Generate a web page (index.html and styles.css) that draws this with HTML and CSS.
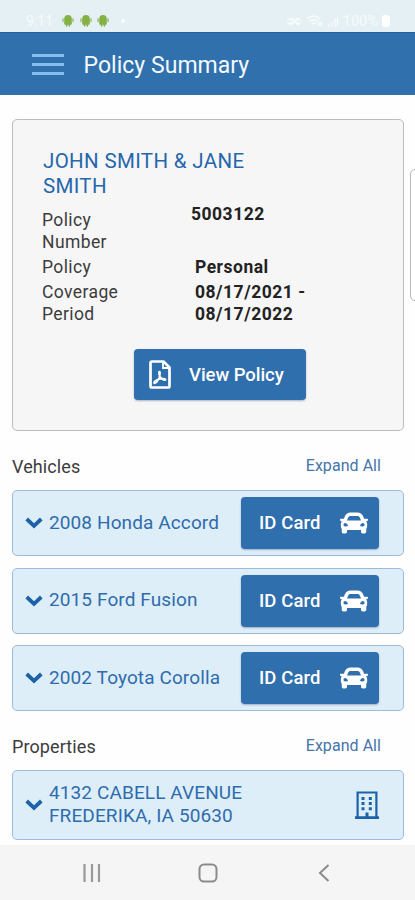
FILE: index.html
```html
<!DOCTYPE html>
<html lang="en">
<head>
<meta charset="utf-8">
<title>Policy Summary</title>
<link rel="stylesheet" href="styles.css">
</head>
<body>
<svg class="defs" width="0" height="0" aria-hidden="true">
  <symbol id="android" viewBox="0 0 12 13">
    <path fill="#84b044" d="M2.200 4.600C2.400 2 4 1 6 1s3.600 1 3.800 3.600zM2.200 4.500h7.600v5.300c0 .6-.4.900-.9.900h-.8v1.400a.75.75 0 0 1-1.500 0v-1.400H5.400v1.400a.75.75 0 0 1-1.500 0v-1.400h-.8c-.5 0-.9-.3-.9-.9z"/>
    <path stroke="#9cc06c" stroke-width="1.500" stroke-linecap="round" d="M1 5v2.600M11 5v2.600"/>
  </symbol>
  <symbol id="chevron" viewBox="0 0 18 12">
    <path fill="none" stroke="#1c62a8" stroke-width="3.800" d="M1.700 2 9 8.800 16.300 2"/>
  </symbol>
  <symbol id="car" viewBox="0 64 512 384">
    <path fill="#fff" d="M499.990 176h-59.870l-16.640-41.600C406.380 91.630 365.570 64 319.500 64h-127c-46.060 0-86.880 27.630-103.990 70.400L71.870 176H12.010C4.200 176-1.530 183.340.370 190.910l6 24C7.700 220.250 12.500 224 18.010 224h20.070C24.650 235.730 16 252.780 16 272v48c0 16.120 6.160 30.670 16 41.930V416c0 17.670 14.330 32 32 32h32c17.670 0 32-14.330 32-32v-32h256v32c0 17.670 14.330 32 32 32h32c17.670 0 32-14.330 32-32v-54.070c9.840-11.250 16-25.800 16-41.930v-48c0-19.220-8.650-36.270-22.070-48H494c5.510 0 10.310-3.750 11.640-9.090l6-24c1.890-7.570-3.840-14.910-11.650-14.910zm-352.060-17.830c7.290-18.220 24.940-30.170 44.570-30.170h127c19.630 0 37.280 11.950 44.570 30.170L384 208H128l19.930-49.830zM96 319.800c-19.200 0-32-12.760-32-31.900S76.800 256 96 256s48 28.710 48 47.850-28.800 15.950-48 15.950zm320 0c-19.200 0-48 3.190-48-15.950S396.800 256 416 256s32 12.760 32 31.900-12.800 31.900-32 31.900z"/>
  </symbol>
</svg>

<div class="status">
  <span class="clock">9:11</span>
  <svg class="droid"><use href="#android"/></svg>
  <svg class="droid"><use href="#android"/></svg>
  <svg class="droid"><use href="#android"/></svg>
  <span class="dot"></span>
  <svg class="signals" width="54" height="14" viewBox="0 0 54 14" fill="none" stroke="#f7fbfc">
    <path stroke-width="2" d="M3 5h4l5 5h2M3 10h3l5-5h3"/>
    <circle cx="3.500" cy="7.500" r="2"/><circle cx="13" cy="7.500" r="2"/>
    <path stroke-width="1.700" d="M21 5c4-4 9-4 13 0M23.500 7.500c3-2.500 5.500-2.500 8 0M26 10c1.500-1.300 2.500-1.300 4 0M33 8v4M35 12V8"/>
    <path stroke-width="1.300" d="M43 13v-3M46 13V8M49 13V5M51.500 13V3"/>
  </svg>
  <span class="percent">100%</span>
  <span class="battery"></span>
</div>

<header class="header">
  <div class="menu"><i></i><i></i><i></i></div>
  <h1 class="title">Policy Summary</h1>
</header>

<main class="content">
  <section class="card">
    <h2 class="insured">JOHN SMITH &amp; JANE SMITH</h2>
    <dl class="facts">
      <dt>Policy<br>Number</dt><dd class="number">5003122</dd>
      <dt>Policy</dt><dd>Personal</dd>
      <dt>Coverage<br>Period</dt><dd>08/17/2021 -<br>08/17/2022</dd>
    </dl>
    <button class="btn view">
      <svg width="22" height="29" viewBox="0 0 22 29" fill="none" stroke="#fff">
        <path stroke-width="2.700" stroke-linejoin="round" d="M3 1.500h11.500l6 6V26q0 1.500-1.500 1.500H3Q1.500 27.500 1.500 26V3Q1.500 1.500 3 1.500z"/>
        <path stroke-width="1.800" d="M14 2v6h6"/>
        <path stroke-width="1.700" stroke-linecap="round" stroke-linejoin="round" d="M10.300 11.500c1.300 0 .8 3.500-.2 6.200-1.200 3-3.500 5.700-4.800 5.700-1.400-1.300 2.200-3.800 5.500-4.500 3-.6 6-.3 5.900.8-.5 1.400-4.200-.4-5.800-3.200-1-1.800-1.400-5-.6-5z"/>
      </svg>
      <span>View Policy</span>
    </button>
  </section>

  <div class="section-head"><h3>Vehicles</h3><a>Expand All</a></div>
  <div class="list">
    <div class="row">
      <svg class="chev"><use href="#chevron"/></svg><span class="name">2008 Honda Accord</span>
      <button class="btn id"><span>ID Card</span><svg class="car"><use href="#car"/></svg></button>
    </div>
    <div class="row">
      <svg class="chev"><use href="#chevron"/></svg><span class="name">2015 Ford Fusion</span>
      <button class="btn id"><span>ID Card</span><svg class="car"><use href="#car"/></svg></button>
    </div>
    <div class="row">
      <svg class="chev"><use href="#chevron"/></svg><span class="name">2002 Toyota Corolla</span>
      <button class="btn id"><span>ID Card</span><svg class="car"><use href="#car"/></svg></button>
    </div>
  </div>

  <div class="section-head second"><h3>Properties</h3><a>Expand All</a></div>
  <div class="row property">
    <svg class="chev"><use href="#chevron"/></svg>
    <span class="name">4132 CABELL AVENUE<br>FREDERIKA, IA 50630</span>
    <svg class="building" width="24" height="28" viewBox="0 0 24 28">
      <path fill="none" stroke="#1c62a8" stroke-width="2.200" d="M2.600 26V1.500h18.800V26"/>
      <path fill="#1c62a8" d="M0 25.300h24V28H0zM10.500 21.500h3v4.500h-3zM6.500 6h3v3h-3zM13.800 6h3v3h-3zM6.500 11h3v3h-3zM13.800 11h3v3h-3zM6.500 16.200h3v3h-3zM13.800 16.200h3v3h-3z"/>
    </svg>
  </div>
</main>

<nav class="nav">
  <svg width="18" height="18" viewBox="0 0 18 18"><path stroke="#999" stroke-width="2.200" d="M1.500 0v18M9 0v18M16 0v18"/></svg>
  <svg class="home" width="20" height="20" viewBox="0 0 20 20"><rect x="1.500" y="1.500" width="17" height="17" rx="4.500" fill="none" stroke="#8b8b8b" stroke-width="2"/></svg>
  <svg width="12" height="18" viewBox="0 0 12 18"><path fill="none" stroke="#8b8b8b" stroke-width="2" d="M10.500 1 2 9l8.500 8"/></svg>
</nav>
<aside class="drawer"></aside>
</body>
</html>
```
FILE: styles.css
```css
* { box-sizing: border-box; }

body {
  margin: 0;
  width: 415px;
  height: 900px;
  display: flex;
  flex-direction: column;
  position: relative;
  overflow: hidden;
  background: #fefefe;
  font-family: Roboto, sans-serif;
  color: #3c3c3c;
}

h1, h2, h3, dl, dd { margin: 0; font-weight: 400; }

svg { display: block; flex: none; }

.defs { position: absolute; }

.status {
  height: 32px;
  flex: none;
  display: flex;
  align-items: center;
  padding: 9px 25px 0 26px;
  background: #e4f0f3;
  color: #f7fbfc;
  font-size: 14px;
}

.clock { width: 36px; }
.droid { width: 12px; height: 13px; margin-right: 5.500px; }
.dot { width: 4px; height: 4px; border-radius: 50%; margin-left: 6px; background: #fafdfd; }
.signals { margin-left: auto; margin-right: 3px; }
.percent { width: 39px; letter-spacing: 0.300px; }
.battery { width: 8px; height: 12px; border-radius: 3px; background: #fff; }

.header {
  height: 63px;
  flex: none;
  display: flex;
  align-items: center;
  gap: 19.500px;
  padding: 1px 32px 0;
  background: #3070ad;
  border-top: 1px solid #1f62a7;
}

.menu { width: 32px; display: grid; gap: 6px; margin-top: -1px; }
.menu i { height: 3px; background: #86bdec; }

.title { margin-top: 2px; color: #f3f9ff; font-size: 23px; letter-spacing: 0.030px; }

.content { flex: 1; padding: 24px 11px 0 12px; }

.card {
  height: 312px;
  padding: 29px 30px 0;
  border: 1px solid #b9bcbe;
  border-radius: 5px;
  background: #f6f6f6;
}

.insured {
  width: 230px;
  color: #2567ac;
  font-size: 20.500px;
  line-height: 25px;
  letter-spacing: 0.340px;
}

.facts {
  display: grid;
  grid-template-columns: 153px 1fr;
  margin: 10px 0 0 -1px;
  font-size: 17.500px;
  line-height: 22px;
  letter-spacing: 0.400px;
}

.facts dt { padding-bottom: 3px; }
.facts dd { color: #222; font-weight: 700; letter-spacing: 0.500px; }
.facts .number { margin: -6px 0 0 -4px; }

.btn {
  display: flex;
  align-items: center;
  height: 52px;
  border: 0;
  border-radius: 4px;
  background: #2f6fae;
  color: #fff;
  font: 500 18.500px Roboto, sans-serif;
  letter-spacing: -0.050px;
  box-shadow: 0 1px 2px rgba(60, 80, 130, 0.400);
}

.view { width: 172px; height: 51px; margin: 21px 0 0 91px; padding: 0 15px; gap: 18px; }

.section-head {
  display: flex;
  align-items: center;
  justify-content: space-between;
  height: 22px;
  margin: 24px 23px 13px 0;
}

.section-head h3 { font-size: 18px; letter-spacing: 0.100px; }
.section-head a { margin-top: -2px; color: #4674aa; font-size: 16px; letter-spacing: 0.050px; }

.list { display: grid; gap: 11.500px; }

.row {
  display: flex;
  align-items: center;
  height: 66px;
  padding: 0 24px 0 11.500px;
  border: 1px solid #9dbbd9;
  border-radius: 5px;
  background: #deeef9;
  color: #2f6cad;
}

.chev { width: 18px; height: 12px; margin-right: 6.500px; }
.name { flex: 1; margin-top: -2px; font-size: 19px; letter-spacing: 0.110px; white-space: nowrap; }

.id { width: 138.500px; padding: 0 11.500px 0 18.500px; letter-spacing: 0.100px; justify-content: space-between; }
.car { width: 28px; height: 22px; }

.second { margin: 24px 23px 13px 0; }
.property { height: 70px; line-height: 23px; }
.building { margin-top: -1px; }

.nav {
  height: 55px;
  flex: none;
  display: flex;
  justify-content: space-between;
  align-items: center;
  padding: 0 85px 0 83px;
  background: #f5f5f5;
}

.home { margin: 0 4px 0 0; }

.drawer {
  position: absolute;
  left: 410px;
  top: 169px;
  width: 12px;
  height: 132px;
  border: 1px solid #b8b8b8;
  border-radius: 5px;
  background: #fff;
}
```
